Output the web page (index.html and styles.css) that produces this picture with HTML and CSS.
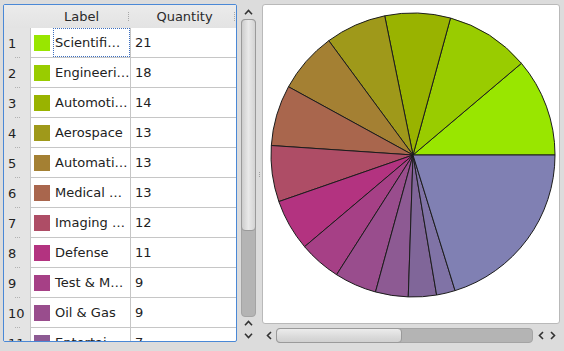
FILE: index.html
```html
<!DOCTYPE html>
<html>
<head>
  <meta charset="UTF-8">
  <link rel="stylesheet" href="styles.css">
</head>
<body>
  <div class="window">
    <div class="table-frame">
      <div class="header">
        <div class="corner"></div>
        <div class="hsection label-col"><span class="htext">Label</span><span class="grip"></span></div>
        <div class="hsection qty-col"><span class="htext">Quantity</span><span class="grip"></span></div>
      </div>
      <div class="row">
        <div class="rownum"><span>1</span></div>
        <div class="cell label-col"><span class="swatch" style="background:#99e600"></span><span class="text focus">Scientifi…</span></div>
        <div class="cell qty-col">21</div>
      </div>
      <div class="row">
        <div class="rownum"><span>2</span></div>
        <div class="cell label-col"><span class="swatch" style="background:#99cc00"></span><span class="text">Engineeri…</span></div>
        <div class="cell qty-col">18</div>
      </div>
      <div class="row">
        <div class="rownum"><span>3</span></div>
        <div class="cell label-col"><span class="swatch" style="background:#99b300"></span><span class="text">Automoti…</span></div>
        <div class="cell qty-col">14</div>
      </div>
      <div class="row">
        <div class="rownum"><span>4</span></div>
        <div class="cell label-col"><span class="swatch" style="background:#9f991a"></span><span class="text">Aerospace</span></div>
        <div class="cell qty-col">13</div>
      </div>
      <div class="row">
        <div class="rownum"><span>5</span></div>
        <div class="cell label-col"><span class="swatch" style="background:#a48033"></span><span class="text">Automati…</span></div>
        <div class="cell qty-col">13</div>
      </div>
      <div class="row">
        <div class="rownum"><span>6</span></div>
        <div class="cell label-col"><span class="swatch" style="background:#a9664d"></span><span class="text">Medical …</span></div>
        <div class="cell qty-col">13</div>
      </div>
      <div class="row">
        <div class="rownum"><span>7</span></div>
        <div class="cell label-col"><span class="swatch" style="background:#ae4d66"></span><span class="text">Imaging …</span></div>
        <div class="cell qty-col">12</div>
      </div>
      <div class="row">
        <div class="rownum"><span>8</span></div>
        <div class="cell label-col"><span class="swatch" style="background:#b33380"></span><span class="text">Defense</span></div>
        <div class="cell qty-col">11</div>
      </div>
      <div class="row">
        <div class="rownum"><span>9</span></div>
        <div class="cell label-col"><span class="swatch" style="background:#a64086"></span><span class="text">Test &amp; M…</span></div>
        <div class="cell qty-col">9</div>
      </div>
      <div class="row">
        <div class="rownum"><span>10</span></div>
        <div class="cell label-col"><span class="swatch" style="background:#994d8d"></span><span class="text">Oil &amp; Gas</span></div>
        <div class="cell qty-col">9</div>
      </div>
      <div class="row">
        <div class="rownum"><span>11</span></div>
        <div class="cell label-col"><span class="swatch" style="background:#8d5a93"></span><span class="text">Entertai…</span></div>
        <div class="cell qty-col">7</div>
      </div>
    </div>

    <div class="vscroll">
      <div class="arrow-box">
        <svg width="9" height="6" viewBox="0 0 9 6"><polyline points="1,5.2 4.5,1.5 8,5.2" /></svg>
      </div>
      <div class="groove">
        <div class="slider"></div>
      </div>
      <div class="arrow-box bottom">
        <svg width="9" height="6" viewBox="0 0 9 6"><polyline points="1,5.2 4.5,1.5 8,5.2" /></svg>
        <svg width="9" height="6" viewBox="0 0 9 6"><polyline points="1,0.8 4.5,4.5 8,0.8" /></svg>
      </div>
    </div>

    <div class="splitter"><span class="handle"></span></div>

    <div class="pie-pane">
      <div class="pie-panel">
        <svg class="pie" width="296" height="318" viewBox="263 5 296 318">
          <g stroke="#1c1c1c" stroke-width="1" stroke-linejoin="round">
            <path fill="#99e600" d="M413 155 L555 155 A142 142 0 0 0 521.43 63.33 Z"/>
            <path fill="#99cc00" d="M413 155 L521.43 63.33 A142 142 0 0 0 450.52 18.04 Z"/>
            <path fill="#99b300" d="M413 155 L450.52 18.04 A142 142 0 0 0 384.71 15.84 Z"/>
            <path fill="#9f991a" d="M413 155 L384.71 15.84 A142 142 0 0 0 328.78 40.68 Z"/>
            <path fill="#a48033" d="M413 155 L328.78 40.68 A142 142 0 0 0 288.48 86.76 Z"/>
            <path fill="#a9664d" d="M413 155 L288.48 86.76 A142 142 0 0 0 271.32 145.51 Z"/>
            <path fill="#ae4d66" d="M413 155 L271.32 145.51 A142 142 0 0 0 278.85 201.59 Z"/>
            <path fill="#b33380" d="M413 155 L278.85 201.59 A142 142 0 0 0 304.57 246.68 Z"/>
            <path fill="#a64086" d="M413 155 L304.57 246.68 A142 142 0 0 0 336.59 274.69 Z"/>
            <path fill="#994d8d" d="M413 155 L336.59 274.69 A142 142 0 0 0 375.48 291.96 Z"/>
            <path fill="#8d5a93" d="M413 155 L375.48 291.96 A142 142 0 0 0 408.26 296.92 Z"/>
            <path fill="#806699" d="M413 155 L408.26 296.92 A142 142 0 0 0 436.61 295.03 Z"/>
            <path fill="#8073a6" d="M413 155 L436.61 295.03 A142 142 0 0 0 455.07 290.62 Z"/>
            <path fill="#8080b3" d="M413 155 L455.07 290.62 A142 142 0 0 0 555 155 Z"/>
          </g>
        </svg>
      </div>
      <div class="hscroll">
        <div class="harrow-box">
          <svg width="6" height="9" viewBox="0 0 6 9"><polyline points="5,1 1.5,4.5 5,8" /></svg>
        </div>
        <div class="hgroove">
          <div class="hslider"></div>
        </div>
        <div class="harrow-box right">
          <svg width="6" height="9" viewBox="0 0 6 9"><polyline points="5,1 1.5,4.5 5,8" /></svg>
          <svg width="6" height="9" viewBox="0 0 6 9"><polyline points="1,1 4.5,4.5 1,8" /></svg>
        </div>
      </div>
    </div>
  </div>
</body>
</html>
```

FILE: styles.css
```css
body {
  margin: 0;
  width: 564px;
  height: 351px;
  overflow: hidden;
  background: #dcdcdc;
  font-family: "DejaVu Sans", sans-serif;
  font-size: 13px;
  color: #222;
}

.window {
  display: flex;
  padding: 4px 0 0 3px;
}

/* 表格 */
.table-frame {
  width: 234px;
  height: 338px;
  box-sizing: border-box;
  border: 1px solid #4a88d6;
  border-radius: 2px;
  background: #fff;
  overflow: hidden;
  flex: none;
}

.header {
  display: flex;
  height: 23px;
  background: linear-gradient(#ebebeb, #e3e3e3);
  color: #2a2a2a;
}

.corner {
  width: 26px;
}

.hsection {
  display: flex;
  align-items: center;
  box-sizing: border-box;
}

.label-col {
  width: 100px;
}

.qty-col {
  width: 106px;
}

.htext {
  flex: 1;
  text-align: center;
  padding-left: 2px;
}

.grip {
  height: 9px;
  border-left: 1px dotted #a8a8a8;
  margin-left: -3px;
  margin-right: 1px;
}

.row {
  display: flex;
  height: 30px;
}

.rownum {
  width: 26px;
  background: #e4e4e4;
  display: flex;
  flex-direction: column;
}

.rownum span {
  flex: 1;
  display: flex;
  align-items: center;
  padding: 2px 0 0 4px;
}

.rownum::after {
  content: '';
  width: 5px;
  height: 0;
  margin-left: 11px;
  border-top: 1px dotted #b0b0b0;
}

.cell {
  box-sizing: border-box;
  border-left: 1px solid #c6c6c6;
  border-bottom: 1px solid #c6c6c6;
  display: flex;
  align-items: center;
  white-space: nowrap;
}

.cell.qty-col {
  padding-left: 4px;
}

.swatch {
  flex: none;
  width: 16px;
  height: 16px;
  margin-left: 3px;
}

.text {
  flex: 1;
  align-self: stretch;
  display: flex;
  align-items: center;
  margin-left: 3px;
  padding-left: 1px;
  border: 1px solid transparent;
  overflow: hidden;
}

.text.focus {
  border: 1px dotted #3d6fc0;
}

/* 滚动条 */
.vscroll {
  flex: none;
  width: 17px;
  height: 340px;
  margin-left: 3px;
  display: flex;
  flex-direction: column;
}

.arrow-box {
  height: 15px;
  display: flex;
  flex-direction: column;
  align-items: center;
  justify-content: center;
}

.arrow-box.bottom {
  height: 27px;
  justify-content: flex-start;
  padding-top: 3px;
  gap: 7px;
  box-sizing: border-box;
}

svg polyline {
  fill: none;
  stroke: #333;
  stroke-width: 1.6;
}

.groove {
  height: 298px;
  margin: 0 1px;
  box-sizing: border-box;
  border: 1px solid #a4a4a4;
  border-radius: 4px;
  background: #b4b4b4;
  display: flex;
  flex-direction: column;
}

.slider {
  height: 210px;
  margin: -1px;
  border: 1px solid #9a9a9a;
  border-radius: 4px;
  background: linear-gradient(to right, #cdcdcd, #e9e9e9 50%, #d3d3d3);
}

.splitter {
  flex: none;
  width: 5px;
  display: flex;
  align-items: center;
  justify-content: center;
  height: 340px;
}

.handle {
  height: 5px;
  border-left: 1px dotted #a0a0a0;
}

/* 饼图 */
.pie-pane {
  flex: none;
  width: 298px;
  display: flex;
  flex-direction: column;
}

.pie-panel {
  height: 320px;
  box-sizing: border-box;
  border: 1px solid #b9b9b9;
  border-radius: 3px;
  background: #fff;
  overflow: hidden;
}

.pie {
  display: block;
}

.hscroll {
  display: flex;
  align-items: center;
  height: 17px;
  margin-top: 3px;
}

.harrow-box {
  width: 13px;
  display: flex;
  justify-content: center;
  align-items: center;
}

.harrow-box.right {
  width: 27px;
  justify-content: flex-start;
  padding-left: 5px;
  gap: 6px;
  box-sizing: border-box;
}

.hgroove {
  width: 257px;
  height: 15px;
  margin-left: 1px;
  box-sizing: border-box;
  border: 1px solid #a4a4a4;
  border-radius: 4px;
  background: #b4b4b4;
  display: flex;
}

.hslider {
  width: 124px;
  margin: -1px;
  border: 1px solid #9a9a9a;
  border-radius: 4px;
  background: linear-gradient(#ececec, #dadada 60%, #d0d0d0);
}
```
